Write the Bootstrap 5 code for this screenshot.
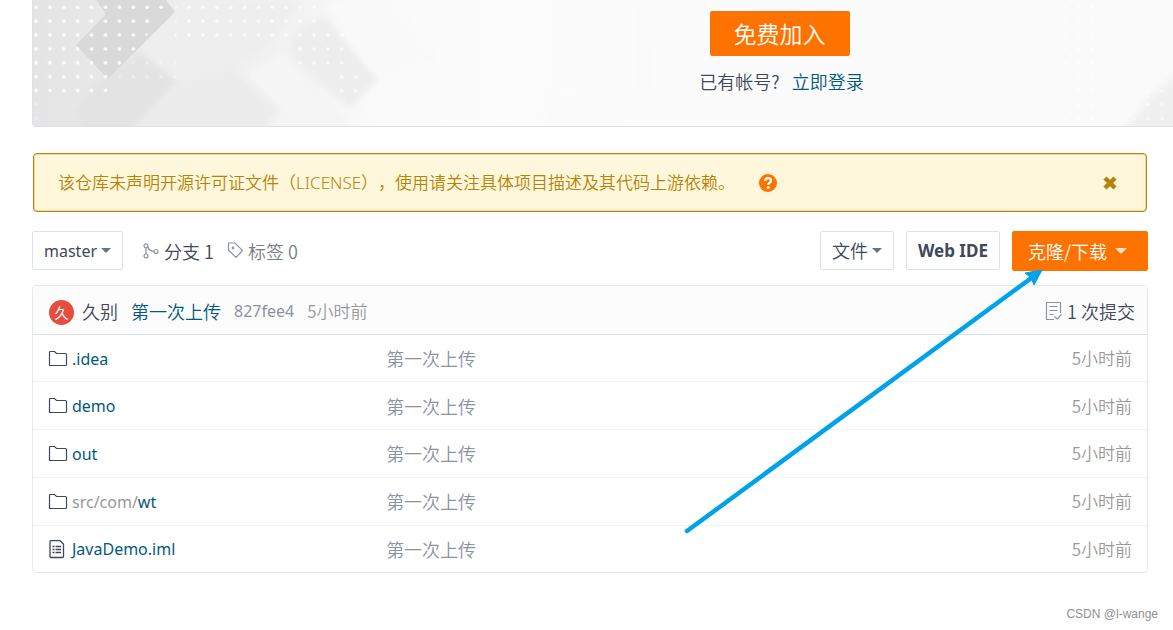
<!DOCTYPE html>
<html lang="zh-CN">
<head>
<meta charset="utf-8">
<meta name="viewport" content="width=device-width, initial-scale=1">
<title>JavaDemo</title>
<link href="https://cdn.jsdelivr.net/npm/bootstrap@5.3.0/dist/css/bootstrap.min.css" rel="stylesheet">
<style>
  body { font-family: "Noto Sans", "Noto Sans CJK SC", sans-serif; font-size: 16px; line-height: 24px; color: #40485b; background: #fff; overflow-x: hidden; }
  a { color: #005980; text-decoration: none; }
  a:hover { text-decoration: underline; }
  .cjk { font-family: "Noto Sans CJK SC", sans-serif; font-weight: 350; font-size: 18px; }
  .cjk-sm { font-family: "Noto Sans CJK SC", sans-serif; font-weight: 350; font-size: 17px; }
  .page { padding-left: 32px; }
  .page-body { padding-right: 25px; }
  .banner { border: 1px solid #dce3e8; border-width: 0 0 1px 1px; border-bottom-left-radius: 4px; padding: 11px 0 32px 353px; overflow: hidden; }
  .banner-art { position: absolute; left: 0; top: 0; width: 100%; height: 100%; }
  .btn { --bs-btn-border-radius: 2px; }
  .btn-brand { --bs-btn-bg: #fe7300; --bs-btn-color: #fff; --bs-btn-border-color: #fe7300; --bs-btn-hover-bg: #e66800; --bs-btn-hover-color: #fff; --bs-btn-hover-border-color: #e66800; }
  .btn-join { font-size: 23px; line-height: 33px; padding: 5px 23px; }
  .login { margin-top: 12px; line-height: 26px; gap: 12px; padding-left: 4px; }
  .license { margin: 26px 1px 19px; padding: 0 28px 0 24px; height: 59px; border: 1px solid #b88207; border-radius: 4px; background: #fff7db; color: #b88207; box-shadow: inset 0 0 0 1px #f0dca0; }
  .license-text { font-family: "Noto Sans", "Noto Sans CJK SC", sans-serif; font-feature-settings: "chws" 0, "halt" 0; text-spacing-trim: space-all; }
  .help { color: #fe7300; margin-left: 24px; }
  .plain { background: none; border: 0; padding: 0; color: inherit; line-height: 0; }
  .btn-tool { --bs-btn-border-color: #dce3e8; --bs-btn-color: #40485b; --bs-btn-bg: #fff; --bs-btn-hover-bg: #f5f7f9; --bs-btn-hover-border-color: #ccd3da; --bs-btn-hover-color: #40485b; height: 39px; padding: 0 11px; }
  .btn-ide { font-size: 17px; }
  .btn-clone { height: 40px; padding: 0 20px 0 15px; }
  .caret { width: 0; height: 0; border: 5px solid transparent; border-top-color: #6b7482; border-bottom: 0; }
  .caret-light { border-width: 6px 6px 0; border-top-color: #ffe3cc; }
  .muted { color: #8c92a4; }
  .muted-2 { color: #999; }
  .refs { height: 39px; gap: 13px; margin-left: 19px; }
  .tags { color: #777e88; }
  .tree { margin-top: 14px; border: 1px solid #e3e9ed; border-radius: 4px; overflow: hidden; }
  .tree-head { height: 49px; padding: 2px 12px 0 16px; background: #fcfcfc; border-bottom: 1px solid #dce3e8; }
  .commit { gap: 13px; }
  .avatar { width: 25px; height: 25px; border-radius: 50%; background: #e74c3c; color: #fff; font-size: 14px; margin: 3px 8px 0 0; }
  .files { width: 100%; height: 237px; table-layout: fixed; }
  .files td { padding: 0 15px 0 0; border-top: 1px solid #f0f3f6; vertical-align: middle; }
  .files tr:first-child td { border-top: 0; }
  .files td:first-child { padding: 3px 0 0 15px; }
  .files col.c-name { width: 31.7%; }
  .files col.c-time { width: 20%; }
  .file-ico { width: 20px; height: 20px; margin: 0 4px 4px 0; }
  .credit { font-family: "Liberation Sans", sans-serif; font-size: 12px; line-height: 18px; color: #909090; margin-top: 32px; padding-right: 15px; }
  .pointer { position: absolute; right: 125px; top: 264px; pointer-events: none; }
</style>
</head>
<body>
<svg class="d-none">
  <symbol id="folder" viewBox="0 0 20 20"><path d="M1.500 17V3.500Q1.500 2.500 2.500 2.500H6.500L8.500 4.500H17.500Q18.500 4.500 18.500 5.500V15.500Q18.500 16.500 17.500 16.500H2Q1.500 16.500 1.500 15.500Z" fill="none" stroke="currentColor" stroke-width="1.200"/></symbol>
  <symbol id="doc" viewBox="0 0 20 20"><path d="M3 1.700H12L15.500 5V17.500Q15.500 18.500 14.500 18.500H3Q2 18.500 2 17.500V2.700Q2 1.700 3 1.700Z" fill="none" stroke="currentColor" stroke-width="1.300"/><path d="M4.500 7.500h2M4.500 10.500h2M4.500 13.500h2M7.500 7.500h5.500M7.500 10.500h5.500M7.500 13.500h5.500" stroke="currentColor" stroke-width="1.400"/></symbol>
</svg>
<div class="page position-relative">
  <section class="banner position-relative">
    <svg class="banner-art" viewBox="33 0 1140 126" preserveAspectRatio="xMinYMin slice" aria-hidden="true">
      <defs>
        <linearGradient id="base"><stop offset="0" stop-color="#e4e4e4"/><stop offset=".12" stop-color="#ececec"/><stop offset=".24" stop-color="#f3f3f3"/><stop offset=".3" stop-color="#fafafa"/><stop offset=".4" stop-color="#fcfcfc"/><stop offset="1" stop-color="#fafafa"/></linearGradient>
        <pattern id="dots" x="29" y="0" width="13.900" height="13.900" patternUnits="userSpaceOnUse"><circle cx="7" cy="7.200" r="1.700" fill="#fff"/></pattern>
        <filter id="soft"><feGaussianBlur stdDeviation="3"/></filter>
      </defs>
      <path d="M33 0H1173V126H33Z" fill="url(#base)"/>
      <g filter="url(#soft)">
        <path d="M130 50L180 0H300L270 45L235 66L178 82L150 70Z" fill="#eee"/>
        <path d="M75 110L100 80L140 52L178 82L132 130H82Z" fill="#e3e3e3"/>
        <path d="M178 80L230 66L280 110L265 130H132Z" fill="#ececec"/>
        <path d="M245 75L282 54L355 130H266L280 110Z" fill="#f5f5f5"/>
        <path d="M288 45L300 28L325 18L378 80L350 108L300 65Z" fill="#ededed"/>
        <path d="M325 0H395L440 60L380 80L345 40Z" fill="#f9f9f9"/>
        <path d="M632 0H700V44H655V90H632ZM560 95H610L630 126H540ZM900 0H1090V60H1030L980 110H920L896 44Z" fill="#fafafa"/>
        <path d="M1122 132L1152 95L1180 72V132Z" fill="#f0f0f0"/>
      </g>
      <path d="M96 0H166L175 12L108 79L76 45L106 14Z" fill="#d9d9d9"/>
      <path d="M33 0H175L108 84V98H33Z" fill="url(#dots)"/>
      <path d="M175 0H325V42H175ZM282 28H348V70H300ZM335 70H362V98H335Z" fill="url(#dots)" opacity=".75"/>
      <path d="M33 98H42V126H33ZM108 56H180V84H108Z" fill="url(#dots)" opacity=".35"/>
      <path d="M1045 0H1100V126H1045ZM1140 90H1173V126H1130Z" fill="url(#dots)" opacity=".6"/>
    </svg>
    <div class="position-relative d-flex flex-column align-items-center">
      <button type="button" class="btn btn-brand btn-join cjk">免费加入</button>
      <div class="login d-flex cjk"><span>已有帐号?</span><a href="#">立即登录</a></div>
    </div>
  </section>

  <main class="page-body">
    <div class="license d-flex align-items-center" role="alert">
      <span class="cjk-sm license-text">该仓库未声明开源许可证文件（LICENSE），使用请关注具体项目描述及其代码上游依赖。</span>
      <a href="#" class="help d-flex" aria-label="帮助"><svg width="18" height="18" viewBox="0 0 18 18"><circle cx="9" cy="9" r="9" fill="currentColor"/><path d="M6 6.900Q6.400 4.200 9 4.200Q12 4.200 12 6.700Q12 8 10.500 8.800Q9.300 9.400 9.300 10.700" fill="none" stroke="#fff" stroke-width="2.300"/><circle cx="9.200" cy="13.400" r="1.500" fill="#fff"/></svg></a>
      <button type="button" class="plain ms-auto" aria-label="关闭"><svg width="16" height="16" viewBox="0 0 16 16"><path d="M3 3L13 13M13 3L3 13" stroke="currentColor" stroke-width="4.500"/></svg></button>
    </div>

    <div class="d-flex align-items-start">
      <button type="button" class="btn btn-tool d-flex align-items-center gap-1">master<span class="caret"></span></button>
      <div class="refs d-flex align-items-center">
        <a href="#" class="d-flex align-items-center text-reset">
          <svg class="muted me-1" width="18" height="16" viewBox="0 0 18 16" fill="none" stroke="currentColor" stroke-width="1.200"><circle cx="4" cy="2.800" r="2"/><circle cx="4" cy="13" r="2"/><circle cx="14" cy="8.500" r="2"/><path d="M4 5V11M5.800 4Q7 8 12 8.300"/></svg>
          <span class="cjk">分支 1</span></a>
        <a href="#" class="tags d-flex align-items-center">
          <svg class="muted me-1" width="17" height="17" viewBox="0 0 17 17" fill="none" stroke="currentColor" stroke-width="1.200"><path d="M1.500 2Q1.500 1 2.500 1H8L15.500 8.500L9 15.500L1.500 8Z"/><circle cx="6" cy="6" r=".8"/></svg>
          <span class="cjk">标签 0</span></a>
      </div>
      <div class="d-flex align-items-start ms-auto gap-2">
        <button type="button" class="btn btn-tool cjk d-flex align-items-center gap-1 me-1">文件<span class="caret"></span></button>
        <button type="button" class="btn btn-tool btn-ide fw-bold me-1">Web IDE</button>
        <button type="button" class="btn btn-brand btn-clone cjk d-flex align-items-center gap-2">克隆/下载<span class="caret caret-light"></span></button>
      </div>
    </div>

    <section class="tree">
      <header class="tree-head d-flex align-items-center">
        <span class="avatar d-flex align-items-center justify-content-center">久</span>
        <div class="commit d-flex align-items-center">
          <a href="#" class="cjk text-reset">久别</a>
          <a href="#" class="cjk">第一次上传</a>
          <a href="#" class="muted">827fee4</a>
          <span class="cjk-sm muted-2">5小时前</span>
        </div>
        <a href="#" class="d-flex align-items-center ms-auto text-reset">
          <svg class="muted me-1" width="18" height="20" viewBox="0 0 18 20" fill="none" stroke="currentColor" stroke-width="1.200"><path d="M15.500 12V1.500H2.500Q1.500 1.500 1.500 2.500V18.500H9M4.500 5.500H12.500M4.500 9.500H12.500M4.500 13.500H8.500M9.500 15.500L12 18L16.500 13.500"/></svg>
          <span class="cjk">1 次提交</span></a>
      </header>
      <table class="files">
        <colgroup><col class="c-name"><col><col class="c-time"></colgroup>
        <tbody>
          <tr><td><svg class="file-ico"><use href="#folder"/></svg><a href="#">.idea</a></td><td class="cjk muted">第一次上传</td><td class="cjk-sm muted-2 text-end">5小时前</td></tr>
          <tr><td><svg class="file-ico"><use href="#folder"/></svg><a href="#">demo</a></td><td class="cjk muted">第一次上传</td><td class="cjk-sm muted-2 text-end">5小时前</td></tr>
          <tr><td><svg class="file-ico"><use href="#folder"/></svg><a href="#">out</a></td><td class="cjk muted">第一次上传</td><td class="cjk-sm muted-2 text-end">5小时前</td></tr>
          <tr><td><svg class="file-ico"><use href="#folder"/></svg><a href="#"><span class="muted-2">src/com/</span>wt</a></td><td class="cjk muted">第一次上传</td><td class="cjk-sm muted-2 text-end">5小时前</td></tr>
          <tr><td><svg class="file-ico"><use href="#doc"/></svg><a href="#">JavaDemo.iml</a></td><td class="cjk muted">第一次上传</td><td class="cjk-sm muted-2 text-end">5小时前</td></tr>
        </tbody>
      </table>
    </section>
  </main>
  <footer class="credit text-end">CSDN @l-wange</footer>
  <svg class="pointer" width="368" height="272" viewBox="680 264 368 272" aria-hidden="true"><path d="M687 531L1030 279" stroke="#00a2e8" stroke-width="4.500" stroke-linecap="round"/><path d="M1042 270L1034 285L1031 278L1025 273Z" fill="#00a2e8" stroke="#00a2e8"/></svg>
</div>
<script src="https://cdn.jsdelivr.net/npm/bootstrap@5.3.0/dist/js/bootstrap.bundle.min.js"></script>
</body>
</html>
